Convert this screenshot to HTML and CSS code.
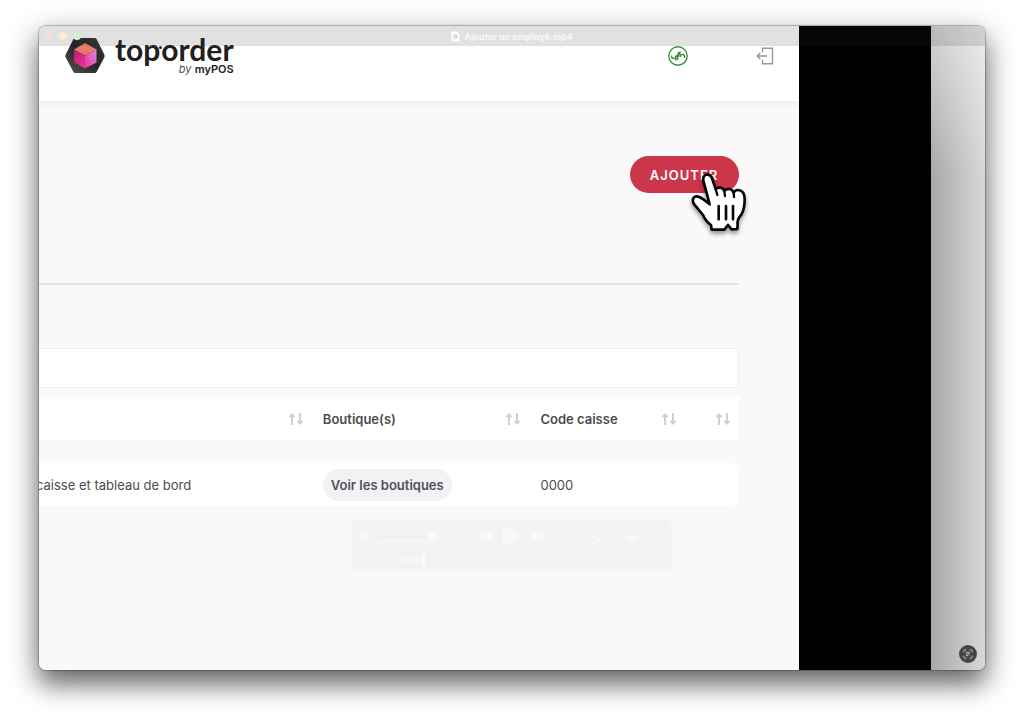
FILE: index.html
```html
<!DOCTYPE html>
<html lang="fr">
<head>
<meta charset="utf-8">
<meta name="viewport" content="width=device-width, initial-scale=1">
<title>Ajouter un employé.mp4</title>
<link rel="stylesheet" href="styles.css">
</head>
<body>
<svg class="defs" width="0" height="0" aria-hidden="true">
  <symbol id="sort" viewBox="0 0 16 12">
    <path d="M4 12V1.500M1.500 4 4 1.500 6.500 4M12 0v10.500M9.500 8l2.500 2.500L14.500 8" fill="none" stroke="currentColor" stroke-width="2"/>
  </symbol>
</svg>
<div class="window">
  <div class="page">
    <header class="header">
      <div class="logo">
        <svg class="logo-mark" viewBox="0 0 40 36" aria-hidden="true">
          <defs>
            <linearGradient id="hex" x1="0" y1="1" x2="1" y2="0"><stop offset="0" stop-color="#555"/><stop offset=".5" stop-color="#252525"/><stop offset="1" stop-color="#3c3c3c"/></linearGradient>
            <linearGradient id="top" x1="0" y1="0" x2="0" y2="1"><stop offset="0" stop-color="#ef8a58"/><stop offset="1" stop-color="#ec6a7a"/></linearGradient>
            <linearGradient id="left" x1="0" y1="0" x2="1" y2="1"><stop offset="0" stop-color="#b32068"/><stop offset="1" stop-color="#f0329a"/></linearGradient>
            <linearGradient id="right" x1="1" y1="0" x2="0" y2="1"><stop offset="0" stop-color="#d58ae8"/><stop offset="1" stop-color="#ee2f8f"/></linearGradient>
          </defs>
          <path d="M10.500 0h19q1.500 0 2.200 1.300l7.600 15.200q.7 1.500 0 3l-7.600 14.200Q31 35 29.500 35h-19Q9 35 8.300 33.700L.7 19.500q-.7-1.500 0-3L8.300 1.300Q9 0 10.500 0Z" fill="url(#hex)"/>
          <path d="M20 5 31.500 11.500 20 17.500 9 11.500Z" fill="url(#top)"/>
          <path d="M9 11.500 20 17.500V30.500L9 24.500Z" fill="url(#left)"/>
          <path d="M31.500 11.500V24.500L20 30.500V17.500Z" fill="url(#right)"/>
        </svg>
        <div class="logo-text">
          <span class="brand">top<i class="dot"></i>order</span>
          <span class="byline"><em>by</em> <b>myPOS</b></span>
        </div>
      </div>
      <nav class="actions">
        <button class="icon-button sync" aria-label="Synchroniser">
          <svg width="20" height="20" viewBox="0 0 20 20" fill="none" stroke="currentColor" stroke-width="1.400"><circle cx="10" cy="10" r="9.200"/><path d="M3.500 9.500Q3.300 12.500 5.500 12.500 7 12.500 7.500 11.500L12.500 5.500M7.500 9.500 8 14.500M9.500 10v4M16.500 12Q17 8.500 14.500 8.500H9M10.500 6v5M12.500 8.500V11"/></svg>
        </button>
        <button class="icon-button exit" aria-label="Déconnexion">
          <svg width="18" height="18" viewBox="0 0 18 18" fill="none" stroke="currentColor" stroke-width="1.400"><path d="M6.500 5.500V1.200h10v15.600h-10v-4.300M1.200 9H11M4.200 6 1.200 9l3 3"/></svg>
        </button>
      </nav>
    </header>
    <main class="content">
      <div class="toolbar"><button class="add">AJOUTER</button></div>
      <hr class="rule">
      <input class="search" type="search" aria-label="Rechercher">
      <table class="staff">
        <colgroup><col class="c-rights"><col class="c-shops"><col class="c-code"><col class="c-more"></colgroup>
        <thead>
          <tr>
            <th><div class="head"><span></span><svg class="sort"><use href="#sort"/></svg></div></th>
            <th><div class="head"><span>Boutique(s)</span><svg class="sort"><use href="#sort"/></svg></div></th>
            <th><div class="head"><span>Code caisse</span><svg class="sort"><use href="#sort"/></svg></div></th>
            <th><div class="head"><span></span><svg class="sort"><use href="#sort"/></svg></div></th>
          </tr>
        </thead>
        <tbody>
          <tr>
            <td>caisse et tableau de bord</td>
            <td><button class="shops">Voir les boutiques</button></td>
            <td>0000</td>
            <td></td>
          </tr>
        </tbody>
      </table>
    </main>
  </div>
  <div class="band"></div>
  <div class="side"></div>

  <div class="titlebar">
    <div class="lights"><i class="close"></i><i class="minimise"></i><i class="expand"></i></div>
    <svg class="doc" viewBox="0 0 9 11" aria-hidden="true"><path d="M1 .5h5l2.500 2.500v7.500H.5V1Z" fill="#fff"/><circle cx="4.500" cy="5.500" r="2" fill="#dfe5ea" stroke="#c8d0d6" stroke-width=".8"/></svg>
    <span>Ajouter un employé.mp4</span>
  </div>

  <div class="player">
    <div class="controls">
      <div class="group volume">
        <svg width="14" height="10" viewBox="0 0 14 10" fill="none" stroke="currentColor"><path d="M0 3h2.500L6 .5v9L2.500 7H0Z" fill="currentColor" stroke="none"/><path d="M8 3q1.500 2 0 4M10 2q2.200 3 0 6M12 1q3 4 0 8" stroke-width=".6"/></svg>
        <div class="level"><i></i></div>
      </div>
      <div class="group transport">
        <svg width="16" height="10" viewBox="0 0 16 10" fill="currentColor"><path d="M8 0v10L0 5ZM16 0v10L8 5Z"/></svg>
        <svg width="18" height="20" viewBox="0 0 18 20" fill="currentColor"><path d="M0 1Q0-.5 1.500.5l15 8.500q1.500 1 0 2l-15 8.500Q0 20.500 0 19Z"/></svg>
        <svg width="16" height="10" viewBox="0 0 16 10" fill="currentColor"><path d="M0 0v10l8-5ZM8 0v10l8-5Z"/></svg>
      </div>
      <div class="group extras">
        <svg width="12" height="12" viewBox="0 0 12 12" fill="none" stroke="currentColor"><path d="M2.500 8.500h-2v-8h11v8h-2" stroke-width=".7"/><path d="m6 7 3.500 4.500h-7Z" fill="currentColor" stroke="none"/></svg>
        <svg width="16" height="12" viewBox="0 0 16 12" fill="none" stroke="currentColor"><path d="M6 9.500H.5v-9h12V5M3 3l3 3" stroke-width=".7"/><path d="M7 6h9v6H7Z" fill="currentColor" stroke="none"/></svg>
        <svg width="10" height="9" viewBox="0 0 10 9" fill="none" stroke="currentColor"><path d="m.5.500 4 4-4 4M5.500.500l4 4-4 4" stroke-width=".8"/></svg>
      </div>
    </div>
    <div class="timeline"><span>788 F</span><div class="track"></div><span>6506 F</span></div>
  </div>

  <button class="live-text" aria-label="Texte en direct">
    <svg width="10" height="10" viewBox="0 0 12 12" fill="none" stroke="#d2d2d2"><path d="M1 4V2.500Q1 1 2.500 1H4M8 1h1.500Q11 1 11 2.500V4M11 8v1.500Q11 11 9.500 11H8M4 11H2.500Q1 11 1 9.500V8M3.500 4h5M3.500 6h5M3.500 8h3"/></svg>
  </button>

  <svg class="hand" viewBox="240 96 174 186" aria-hidden="true">
    <path d="M280 122Q278 105 291 104Q303 103 306 115L317 147Q322 142 331 143Q340 144 343 153Q349 146 358 147Q367 148 371 158Q376 149 385 150Q404 152 404 178Q404 207 394 224Q380 240 383 252L382 267L365 268L354 255L343 269L305 269L303 255Q287 244 279 225L251 191Q246 180 251 173Q257 166 268 171Q281 177 299 193Z" fill="#fff" stroke="#080808" stroke-width="8" stroke-linejoin="round"/>
    <path d="M317 147 322 165M343 153 345 168M371 158 372 171" stroke="#080808" stroke-width="7" stroke-linecap="round"/>
    <path d="M326 198v40M348 198v40M369 198v40" stroke="#080808" stroke-width="8" stroke-linecap="round"/>
  </svg>
</div>
</body>
</html>
```
FILE: styles.css
```css
* { box-sizing: border-box; }

body {
  margin: 0;
  min-height: 100vh;
  padding: 26px 39px 52px;
  display: flex;
  background: #fff;
  color: #4c4c4c;
  font-family: Inter, "Liberation Sans", sans-serif;
  font-size: 13px;
}

button {
  border: 0;
  padding: 0;
  font: inherit;
  color: inherit;
  background: none;
  cursor: pointer;
}

svg { display: block; }
.defs { position: absolute; }

.window {
  position: relative;
  flex: 1;
  display: flex;
  border-radius: 7px;
  box-shadow: 0 0 1px 1px rgba(0, 0, 0, .25), 0 14px 24px rgba(0, 0, 0, .5), 0 8px 36px rgba(0, 0, 0, .22);
}

.page {
  flex: 1;
  min-width: 0;
  overflow: hidden;
  background: #f9f9f9;
  border-radius: 7px 0 0 7px;
}

.band { flex: 0 0 14%; background: #000; }

.side {
  flex: 0 0 54px;
  border-radius: 0 7px 7px 0;
  background:
    linear-gradient(to bottom, rgba(255, 255, 255, .5), rgba(255, 255, 255, 0) 150px),
    linear-gradient(to right, #a8a8a8, #d8d8d8);
}

.header {
  display: flex;
  justify-content: space-between;
  align-items: flex-start;
  height: 75px;
  padding: 12px 25px 0 26px;
  background: #fff;
  box-shadow: 0 1px 8px rgba(0, 0, 0, .07);
}

.logo { display: flex; gap: 10px; }
.logo-mark { width: 40px; height: 36px; }
.logo-text { display: flex; flex-direction: column; align-items: flex-end; color: #202020; }

.brand {
  font-family: Lato, sans-serif;
  font-weight: 700;
  font-size: 30px;
  line-height: 22px;
}

.dot {
  display: inline-block;
  width: 3px;
  height: 3px;
  margin: 0 -1px;
  border-radius: 50%;
  background: #202020;
  vertical-align: 12px;
}

.byline { font-size: 11px; line-height: 18px; }
.byline em { color: #555; }
.byline b { font-weight: 600; }

.actions { display: flex; gap: 68px; padding-top: 8px; }
.sync { color: #3b9142; }
.exit { color: #999; }

.content { margin-left: -14px; padding: 55px 60px 0 0; }
.toolbar { display: flex; justify-content: flex-end; }

.add {
  width: 109px;
  height: 37px;
  border-radius: 19px;
  background: #cb364b;
  color: #fff;
  font-weight: 600;
  letter-spacing: 1px;
}

.rule {
  height: 2px;
  margin: 90px 0 63px;
  border: 0;
  background: #e4e4e4;
}

.search {
  display: block;
  width: 100%;
  height: 40px;
  margin-bottom: 9px;
  border: 1px solid #ebebeb;
  border-radius: 4px;
  background: #fff;
}

.staff {
  width: 100%;
  table-layout: fixed;
  border-collapse: separate;
  border-spacing: 0;
}

.c-rights { width: 40.2%; }
.c-shops { width: 30.5%; }
.c-code { width: 21.8%; }
.c-more { width: 7.5%; }

.staff th, .staff td {
  padding: 0 8px 0 11px;
  background: #fff;
  text-align: left;
  white-space: nowrap;
}

.staff th { height: 43px; font-weight: 600; }
.staff td { height: 43px; }
.staff td:last-child { border-radius: 0 10px 10px 0; }
.staff tbody::before { content: ""; display: block; height: 23px; }

.head { display: flex; justify-content: space-between; align-items: center; }
.sort { width: 16px; height: 12px; color: #d0d0d0; flex: none; }

.shops {
  height: 32px;
  padding: 0 8px;
  border-radius: 16px;
  background: #f2f2f5;
  color: #4e5160;
  font-weight: 600;
}

.titlebar {
  position: absolute;
  inset: 0 0 auto;
  height: 20px;
  display: flex;
  justify-content: center;
  align-items: center;
  gap: 4px;
  border-radius: 7px 7px 0 0;
  background: rgba(41, 41, 32, .14);
  color: #f8f8f8;
  font-size: 9px;
  font-weight: 700;
}

.doc { width: 9px; height: 11px; }
.lights { position: absolute; left: 6px; display: flex; gap: 6px; }
.lights i { width: 8px; height: 8px; border-radius: 50%; }
.close { background: #f8dcda; }
.minimise { background: #fbecd2; }
.expand { background: #d7ecd5; }

.player {
  position: absolute;
  left: 313px;
  top: 494px;
  width: 320px;
  padding: 6px 9px 2px;
  border-radius: 6px;
  background: #f3f3f1;
  color: #f9f9f9;
  font-size: 8px;
}

.controls { display: grid; grid-template-columns: 1fr auto 1fr; align-items: center; }
.group { display: flex; align-items: center; }
.transport { gap: 11px; }
.extras { justify-content: flex-end; gap: 16px; }
.level {
  display: flex;
  justify-content: flex-end;
  align-items: center;
  width: 61px;
  height: 3px;
  margin-left: 2px;
  background: #eaeef8;
}
.level i { width: 11px; height: 11px; border-radius: 50%; background: #f9f9f9; }
.timeline { display: flex; align-items: center; height: 23px; padding-top: 4px; }
.track { width: 31px; height: 10px; margin: 0 auto 0 12px; border-right: 2px solid #fdfdfd; background: linear-gradient(#f9f9f9, #f9f9f9) center / 100% 2px no-repeat; }

.live-text {
  position: absolute;
  right: 8px;
  bottom: 7px;
  width: 18px;
  height: 18px;
  display: grid;
  place-items: center;
  border-radius: 50%;
  background: #454545;
}

.hand {
  position: absolute;
  left: 651px;
  top: 146px;
  width: 58px;
  height: 62px;
  overflow: visible;
  pointer-events: none;
  filter: drop-shadow(0 3px 2px rgba(0, 0, 0, .4));
}
```
